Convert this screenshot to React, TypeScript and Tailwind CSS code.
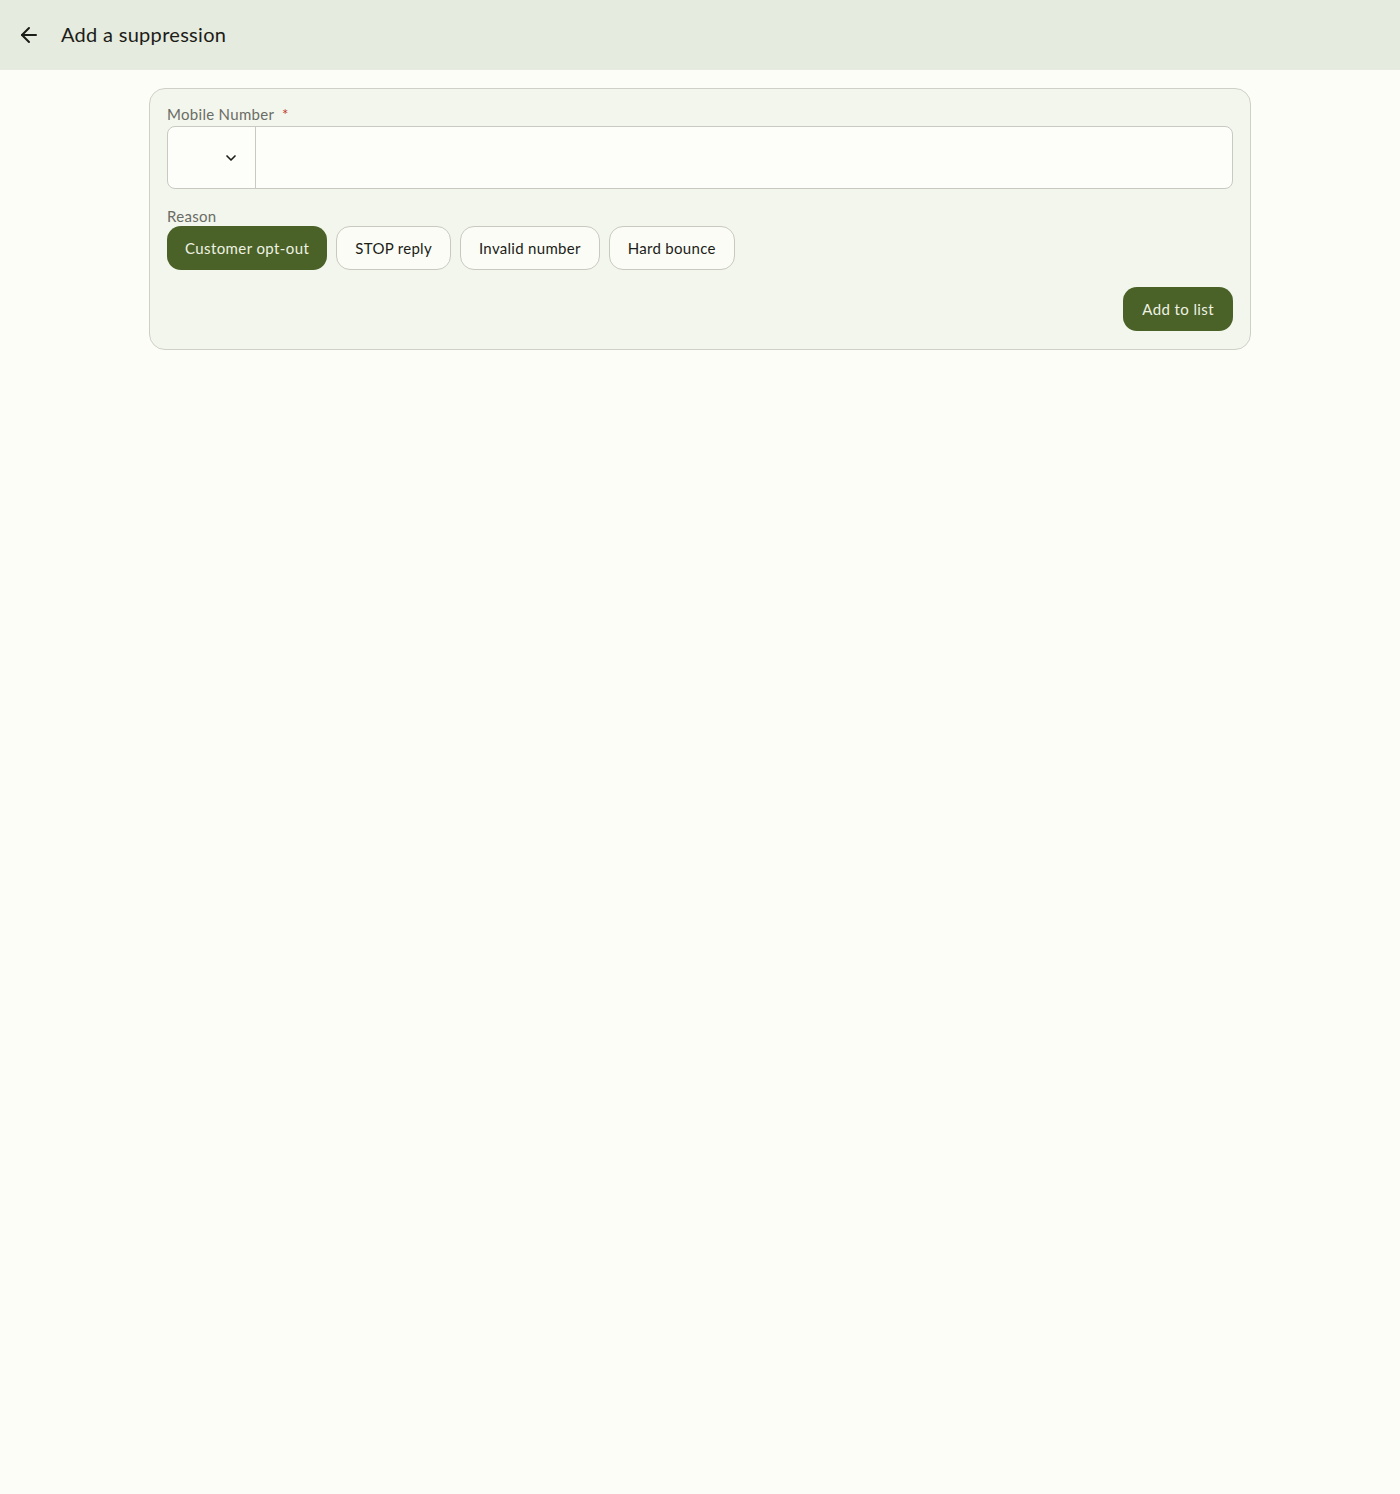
import { ArrowLeft, ChevronDown } from 'lucide-react'

const REASONS = ['Customer opt-out', 'STOP reply', 'Invalid number', 'Hard bounce']

export default function App() {
  const selected = 'Customer opt-out'

  return (
    <div
      className="min-h-[1494px] bg-[#fcfdf7] text-[#1c1c18]"
      style={{ fontFamily: 'Lato, "Noto Sans", sans-serif' }}
    >
      {/* Top bar */}
      <header className="h-[70px] bg-[#e5ebde] flex items-center pl-[17px] gap-[20px]">
        <button className="w-6 h-6 flex items-center justify-center text-[#1c1c18]">
          <ArrowLeft className="w-6 h-6" strokeWidth={2} />
        </button>
        <h1 className="text-[20px] tracking-[0.3px] -mt-[2px]">Add a suppression</h1>
      </header>

      <main className="pt-[18px] flex justify-center">
        <div className="w-[1102px] rounded-[16px] border border-[#cfd1c8] bg-[#f3f6ec] px-[17px] pt-[15px] pb-[18px]">
          {/* Mobile number */}
          <label className="block text-[15px] leading-[20px] tracking-[0.3px] text-[#6a6c66]">
            Mobile Number <span className="text-[#c0392b] ml-[4px]">*</span>
          </label>
          <div className="mt-[2px] h-[63px] flex rounded-[8px] border border-[#c8cac2] bg-[#fdfefa] overflow-hidden">
            <div className="w-[88px] border-r border-[#c8cac2] flex items-center justify-end pr-[16px]">
              <ChevronDown className="w-[16px] h-[16px]" strokeWidth={2.5} />
            </div>
            <input className="flex-1 bg-transparent outline-none px-3 text-[16px]" />
          </div>

          {/* Reason */}
          <div className="mt-[17px] text-[15px] leading-[20px] tracking-[0.3px] text-[#6a6c66]">Reason</div>
          <div className="flex gap-[9px]">
            {REASONS.map((r) =>
              r === selected ? (
                <button
                  key={r}
                  className="h-[44px] px-[18px] rounded-[14px] bg-[#4a6128] text-[#eef2e2] text-[15px] tracking-[0.4px]"
                >
                  {r}
                </button>
              ) : (
                <button
                  key={r}
                  className="h-[44px] px-[18px] rounded-[14px] border border-[#c8cac2] bg-[#fbfcf6] text-[#1c1c18] text-[15px] tracking-[0.3px]"
                >
                  {r}
                </button>
              )
            )}
          </div>

          <div className="mt-[17px] flex justify-end">
            <button className="h-[44px] px-[19px] rounded-[14px] bg-[#4a6128] text-[#eef2e2] text-[15px] tracking-[0.4px]">
              Add to list
            </button>
          </div>
        </div>
      </main>
    </div>
  )
}
